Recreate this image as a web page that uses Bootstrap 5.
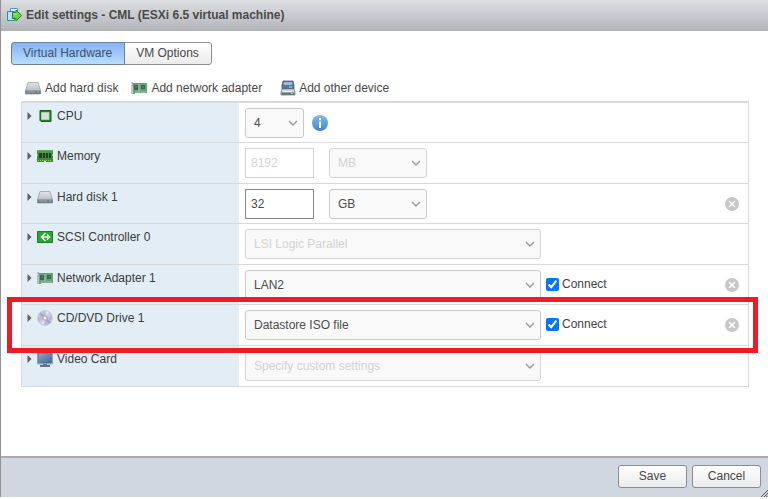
<!DOCTYPE html>
<html lang="en">
<head>
<meta charset="utf-8">
<meta name="viewport" content="width=device-width, initial-scale=1">
<title>Edit settings - CML</title>
<link href="https://cdn.jsdelivr.net/npm/bootstrap@5.3.0/dist/css/bootstrap.min.css" rel="stylesheet">
<style>
body{font-family:"Liberation Sans",Arial,sans-serif;font-size:12px;line-height:16px;color:#444;background:#fff}
.dialog{min-height:calc(100vh - 2px);border-left:1px solid #929292}
.titlebar{height:31px;padding:0 6px 0 6px;gap:4px;background:linear-gradient(#dedfe3,#b6b7bc);border-bottom:2px solid #b4b4b6}
.titlebar h1{font-size:12px;line-height:16px;font-weight:700;color:#4a4a4a}
.content-area{padding:11px 19px 0 10px}
.btn{--bs-btn-font-size:12px;--bs-btn-line-height:16px;--bs-btn-padding-x:11px;--bs-btn-color:#484848;--bs-btn-border-radius:3px;--bs-btn-border-color:#8d8d8d;padding-top:2px;padding-bottom:3px;background:linear-gradient(#fff,#ebebeb)}
.tabs .btn{height:23px;padding-top:1px;padding-right:12px}
.tabs .btn.active{color:#3c536f;border-color:#6f7f96;background:linear-gradient(#86b3f5,#b9defc)}
.tools{padding:15px 0 5px 14px;gap:13px}
.tools .tool{font-size:12px;line-height:16px;color:#484848;gap:4px}
.tools .tool:last-child{margin-left:5px;gap:3px}
.hardware{margin-left:10px;border:1px solid #d9d9d9;border-top-width:2px}
.device{height:41px;border-bottom:1px solid #d9d9d9}
.device:nth-child(odd){height:40px}
.device:last-child{border-bottom:0}
.device-name{width:217px;padding:5px 0 0 5px;background:#e2edf5;color:#3c3c3c}
.disclose{width:10px;height:16px}
.device-name .glyph{margin-right:4px}
.device-body{padding:5px 9px 0 6px}
.form-select,.form-control{font-size:12px;line-height:16px;height:30px;color:#4c4c4c;width:98px;border-color:#c9c9c9}
.form-select{padding:6px 24px 6px 8px;border-radius:3px;background-color:#f9f9f9;background-position:right 4px center;background-size:12px 12px;background-image:url("data:image/svg+xml,%3csvg xmlns='http://www.w3.org/2000/svg' viewBox='0 0 12 12'%3e%3cpath fill='none' stroke='%239a9a9a' stroke-width='1.4' d='M2 4l4 4 4-4'/%3e%3c/svg%3e")}
.form-control{width:69px;padding:6px 5px;border-radius:0;border-color:#858585;margin-right:15px}
.form-select:disabled,.form-control:disabled{color:#d2d2d2;background-color:#f9f9f9;border-color:#d4d4d4}
.form-control:disabled{background-color:#fff}
.select-small{width:59px}
.select-wide{width:296px}
.connect{padding-top:6px;margin-left:5px;gap:3px}
.connect input{width:13px;height:13px;accent-color:#0075ff}
.info{margin:7px 0 0 8px}
.highlight{left:6px;right:10px;top:297px;height:56px;border:5px solid #ed1c24}
.actions{height:41px;padding:0 7px 2px;gap:5px;background:#d0d7e0;border-top:2px solid #aaabad}
.actions .btn{width:69px;height:23px}
.grip{right:0;bottom:0}
svg{display:block;flex:none}
</style>
</head>
<body>
<svg width="0" height="0" class="position-absolute" aria-hidden="true">
<defs>
<linearGradient id="silver" x2="0" y2="1"><stop stop-color="#e2e5e9"/><stop offset="1" stop-color="#a9b0b9"/></linearGradient>
<linearGradient id="blue" x2="0" y2="1"><stop stop-color="#86b9ea"/><stop offset="1" stop-color="#4286cb"/></linearGradient>
<linearGradient id="screen" x2="1" y2="1"><stop stop-color="#8ba8c4"/><stop offset="1" stop-color="#42678e"/></linearGradient>
<linearGradient id="disc" x2="1" y2="1"><stop stop-color="#e8e8ee"/><stop offset=".35" stop-color="#b5b9cf"/><stop offset=".5" stop-color="#d8cce8"/><stop offset=".7" stop-color="#b2b5d5"/><stop offset="1" stop-color="#e5e6ec"/></linearGradient>
<symbol id="i-disk" viewBox="0 0 16 16"><path d="M3 2.500h10l2.500 8v3.500h-15v-3.500z" fill="url(#silver)" stroke="#8f979f" stroke-width=".7"/><path d="M.5 10.500h15V14H.5z" fill="#737c86"/><path d="M2 12h8" stroke="#a5adb6"/><path d="M12 12h2" stroke="#8fd37c"/></symbol>
<symbol id="i-net" viewBox="0 0 16 16"><path d="M1 3h15v10H4v1H2V3z" fill="#64a577"/><path d="M0 3h2v2H1v9" fill="none" stroke="#88958e"/><path d="M3 5h4v5H3zM10 5h4v4h-4z" fill="#3d6555"/><path d="M4 6h2v2H4zM11 6h2v2h-2z" fill="#596e73"/><path d="M8 4v7M4 12h11" stroke="#9bc59a"/></symbol>
<symbol id="i-other" viewBox="0 0 16 16"><path d="M3 1h10l1 4v4H2V5z" fill="#56789c" stroke="#36516e" stroke-width=".7"/><path d="M4 2h8l.6 3H3.400z" fill="#9eb8d0"/><path d="M9 7h3" stroke="#bfe5f5"/><path d="M2 9h12l1 3v3H1v-3z" fill="url(#silver)" stroke="#69747f" stroke-width=".7"/><path d="M1.500 12.500h13V15h-13z" fill="#6d7781"/><path d="M3 11.500h9" stroke="#f2f4f6"/><path d="M11 13.500h2" stroke="#8de07b"/></symbol>
<symbol id="i-cpu" viewBox="0 0 16 16"><path d="M3 2.500h11v11H4l-1-1z" fill="#21842b" stroke="#155e1d"/><path d="M4.500 4.500h7.500v7H4.500z" fill="#dcdedc" stroke="#a9d3a5"/></symbol>
<symbol id="i-mem" viewBox="0 0 16 16"><path d="M0 2h16v4l-1 1 1 1v6H9v-1H7v1H0V8l1-1-1-1z" fill="#368f2d"/><path d="M0 2.500h16M0 4h16" stroke="#75b85c" stroke-width=".7"/><path d="M2 5h3v5H2zM6 5h2v5H6zM9 5h2v5H9zM12 5h2v5h-2z" fill="#293b2c"/><path d="M1 12.500h14" stroke="#b3c75c" stroke-dasharray="1 1"/></symbol>
<symbol id="i-scsi" viewBox="0 0 16 16"><path d="M.5 2.500h15v11H.5z" fill="#2ba636" stroke="#178021"/><path d="M8.500 4 4.500 8l4 4M5 8h6M10 5.500 12.500 8 10 10.500" fill="none" stroke="#e6f7e3" stroke-width="1.500"/></symbol>
<symbol id="i-cd" viewBox="0 0 16 16"><circle cx="8" cy="8" r="7.300" fill="url(#disc)" stroke="#b6b9c6" stroke-width=".7"/><path d="M8 8 2 4l2-2zM8 8l6 4-2 2z" fill="#8f83bd" opacity=".5"/><path d="m8 8 1-7 3 1zM8 8l-1 7-3-1z" fill="#fff" opacity=".6"/><circle cx="8" cy="8" r="2.500" fill="#c4c5d8" stroke="#9698b8" stroke-width=".6"/><circle cx="8" cy="8" r="1.100" fill="#fff"/></symbol>
<symbol id="i-video" viewBox="0 0 16 16"><path d="M.5 1h15v12H.5z" fill="#d6dde4" stroke="#77899b" stroke-width=".7"/><path d="M1.500 2h13v10h-13z" fill="url(#screen)" stroke="#3c5975" stroke-width=".6"/><path d="M6 13h4v1h3v2H3v-2h3z" fill="#607183"/></symbol>
<symbol id="i-arrow" viewBox="0 0 10 16"><path d="M.5 4 4.500 8l-4 4z" fill="#5c5f62"/></symbol>
<symbol id="i-remove" viewBox="0 0 14 14"><circle cx="7" cy="7" r="7" fill="#c8c8c8"/><path d="m4.200 4.200 5.600 5.600m0-5.600L4.200 9.800" stroke="#fff" stroke-width="1.500"/></symbol>
</defs>
</svg>
<main class="dialog d-flex flex-column position-relative">
<header class="titlebar d-flex align-items-center">
<svg width="15" height="16" viewBox="0 0 15 16" aria-hidden="true"><path d="M3.500 1.500h7v8h-7z" fill="#d9f0fa" stroke="#4c9dc3"/><path d="M.5 4.500h7v9h-7z" fill="#bce1f1" stroke="#3588b2"/><path d="M5.500 5.500h3.500V3l5.500 5.500L9 14v-2.500H5.500z" fill="#6bd43c" stroke="#257d20"/><path d="M6.500 7H10" stroke="#c1f299"/></svg>
<h1 class="m-0">Edit settings - CML (ESXi 6.5 virtual machine)</h1>
</header>
<div class="content-area flex-grow-1">
<div class="btn-group tabs d-inline-flex"><button type="button" class="btn active">Virtual Hardware</button><button type="button" class="btn">VM Options</button></div>
<div class="tools d-flex">
<button type="button" class="tool border-0 bg-transparent p-0 d-flex"><svg width="16" height="16"><use href="#i-disk"/></svg>Add hard disk</button>
<button type="button" class="tool border-0 bg-transparent p-0 d-flex"><svg width="16" height="16"><use href="#i-net"/></svg>Add network adapter</button>
<button type="button" class="tool border-0 bg-transparent p-0 d-flex"><svg width="16" height="16"><use href="#i-other"/></svg>Add other device</button>
</div>
<div class="hardware">
<div class="device d-flex"><div class="device-name d-flex flex-shrink-0"><svg class="disclose"><use href="#i-arrow"/></svg><svg class="glyph" width="16" height="16"><use href="#i-cpu"/></svg><label for="cpu">CPU</label></div>
<div class="device-body d-flex flex-grow-1 align-items-start"><select id="cpu" class="form-select select-small"><option>4</option></select><svg class="info" width="16" height="16" viewBox="0 0 16 16" role="img" aria-label="Information"><circle cx="8" cy="8" r="8" fill="url(#blue)"/><path d="M8 3v2.200M8 6.500V13" stroke="#fff" stroke-width="2"/></svg></div></div>
<div class="device d-flex"><div class="device-name d-flex flex-shrink-0"><svg class="disclose"><use href="#i-arrow"/></svg><svg class="glyph" width="16" height="16"><use href="#i-mem"/></svg><label for="memory">Memory</label></div>
<div class="device-body d-flex flex-grow-1 align-items-start"><input id="memory" class="form-control" value="8192" disabled><select class="form-select" aria-label="Memory unit" disabled><option>MB</option></select></div></div>
<div class="device d-flex"><div class="device-name d-flex flex-shrink-0"><svg class="disclose"><use href="#i-arrow"/></svg><svg class="glyph" width="16" height="16"><use href="#i-disk"/></svg><label for="disk">Hard disk 1</label></div>
<div class="device-body d-flex flex-grow-1 align-items-start"><input id="disk" class="form-control" value="32"><select class="form-select" aria-label="Disk unit"><option>GB</option></select><button type="button" class="border-0 bg-transparent p-0 ms-auto mt-2" aria-label="Remove hard disk"><svg width="14" height="14"><use href="#i-remove"/></svg></button></div></div>
<div class="device d-flex"><div class="device-name d-flex flex-shrink-0"><svg class="disclose"><use href="#i-arrow"/></svg><svg class="glyph" width="16" height="16"><use href="#i-scsi"/></svg><label for="scsi">SCSI Controller 0</label></div>
<div class="device-body d-flex flex-grow-1 align-items-start"><select id="scsi" class="form-select select-wide" disabled><option>LSI Logic Parallel</option></select></div></div>
<div class="device d-flex"><div class="device-name d-flex flex-shrink-0"><svg class="disclose"><use href="#i-arrow"/></svg><svg class="glyph" width="16" height="16"><use href="#i-net"/></svg><label for="network">Network Adapter 1</label></div>
<div class="device-body d-flex flex-grow-1 align-items-start"><select id="network" class="form-select select-wide"><option>LAN2</option></select><div class="connect d-flex align-items-center"><input id="connect-net" type="checkbox" class="m-0" checked><label for="connect-net">Connect</label></div><button type="button" class="border-0 bg-transparent p-0 ms-auto mt-2" aria-label="Remove network adapter"><svg width="14" height="14"><use href="#i-remove"/></svg></button></div></div>
<div class="device d-flex"><div class="device-name d-flex flex-shrink-0"><svg class="disclose"><use href="#i-arrow"/></svg><svg class="glyph" width="16" height="16"><use href="#i-cd"/></svg><label for="cd">CD/DVD Drive 1</label></div>
<div class="device-body d-flex flex-grow-1 align-items-start"><select id="cd" class="form-select select-wide"><option>Datastore ISO file</option></select><div class="connect d-flex align-items-center"><input id="connect-cd" type="checkbox" class="m-0" checked><label for="connect-cd">Connect</label></div><button type="button" class="border-0 bg-transparent p-0 ms-auto mt-2" aria-label="Remove CD/DVD drive"><svg width="14" height="14"><use href="#i-remove"/></svg></button></div></div>
<div class="device d-flex"><div class="device-name d-flex flex-shrink-0"><svg class="disclose"><use href="#i-arrow"/></svg><svg class="glyph" width="16" height="16"><use href="#i-video"/></svg><label for="video">Video Card</label></div>
<div class="device-body d-flex flex-grow-1 align-items-start"><select id="video" class="form-select select-wide" disabled><option>Specify custom settings</option></select></div></div>
</div>
</div>
<div class="highlight position-absolute pe-none"></div>
<footer class="actions d-flex justify-content-end align-items-center"><button type="button" class="btn">Save</button><button type="button" class="btn">Cancel</button></footer>
<svg class="grip position-absolute" width="7" height="7" viewBox="0 0 7 7" aria-hidden="true"><path d="M0 7 7 0M3 7l4-4M5.500 7 7 5.500" stroke="#555"/></svg>
</main>
<script src="https://cdn.jsdelivr.net/npm/bootstrap@5.3.0/dist/js/bootstrap.bundle.min.js"></script>
</body>
</html>
